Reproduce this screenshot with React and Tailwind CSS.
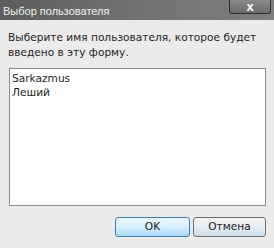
import React from 'react';

function Button({ children, primary }) {
  return (
    <button
      className={
        primary
          ? 'w-[75px] h-[20px] rounded-[3px] border border-[#3c7fb1] bg-gradient-to-b from-[#eaf6fd] via-[#d9f0fc] to-[#a7d9f5] text-[10.6px] text-[#1a1a1a]'
          : 'w-[73px] h-[20px] rounded-[3px] border border-[#707070] bg-gradient-to-b from-[#f2f2f2] via-[#e8eef3] to-[#c9dcea] text-[10.6px] text-[#1a1a1a]'
      }
    >
      {children}
    </button>
  );
}

export default function App() {
  return (
    <div className="w-[274px] h-[248px] bg-[#ebebeb] flex flex-col font-['Tahoma','DejaVu_Sans',sans-serif]">
      {/* Title bar */}
      <div className="h-[20px] flex items-start justify-between bg-gradient-to-r from-[#5c5c5c] via-[#727272] to-[#7e7e7e]">
        <span className="pl-[3px] pt-[4px] font-['Liberation_Sans',sans-serif] text-[11px] leading-[14px] text-[#f0f0f0]">Выбор пользователя</span>
        <div className="mr-[3px] w-[42px] h-[14px] border border-[#2e2e2e] border-t-0 rounded-b-[3px] bg-gradient-to-b from-[#8a8a8a] to-[#6b6b6b] flex items-center justify-center">
          <span className="font-['Liberation_Sans',sans-serif] text-[13px] leading-[12px] font-bold text-white">x</span>
        </div>
      </div>

      {/* Prompt */}
      <p className="px-[8px] pt-[10px] text-[10.6px] leading-[15px] text-[#1e1e1e]">
        Выберите имя пользователя, которое будет введено в эту форму.
      </p>

      {/* List */}
      <div className="mx-[9px] mt-[8px] h-[138px] w-[257px] bg-white border border-[#8b8b8b] px-[2px] py-[2px] text-[10.6px] leading-[14px] text-[#1e1e1e]">
        <div>Sarkazmus</div>
        <div>Леший</div>
      </div>

      {/* Buttons */}
      <div className="flex justify-end gap-[3px] pr-[8px] pt-[11px]">
        <Button primary>OK</Button>
        <Button>Отмена</Button>
      </div>
    </div>
  );
}
